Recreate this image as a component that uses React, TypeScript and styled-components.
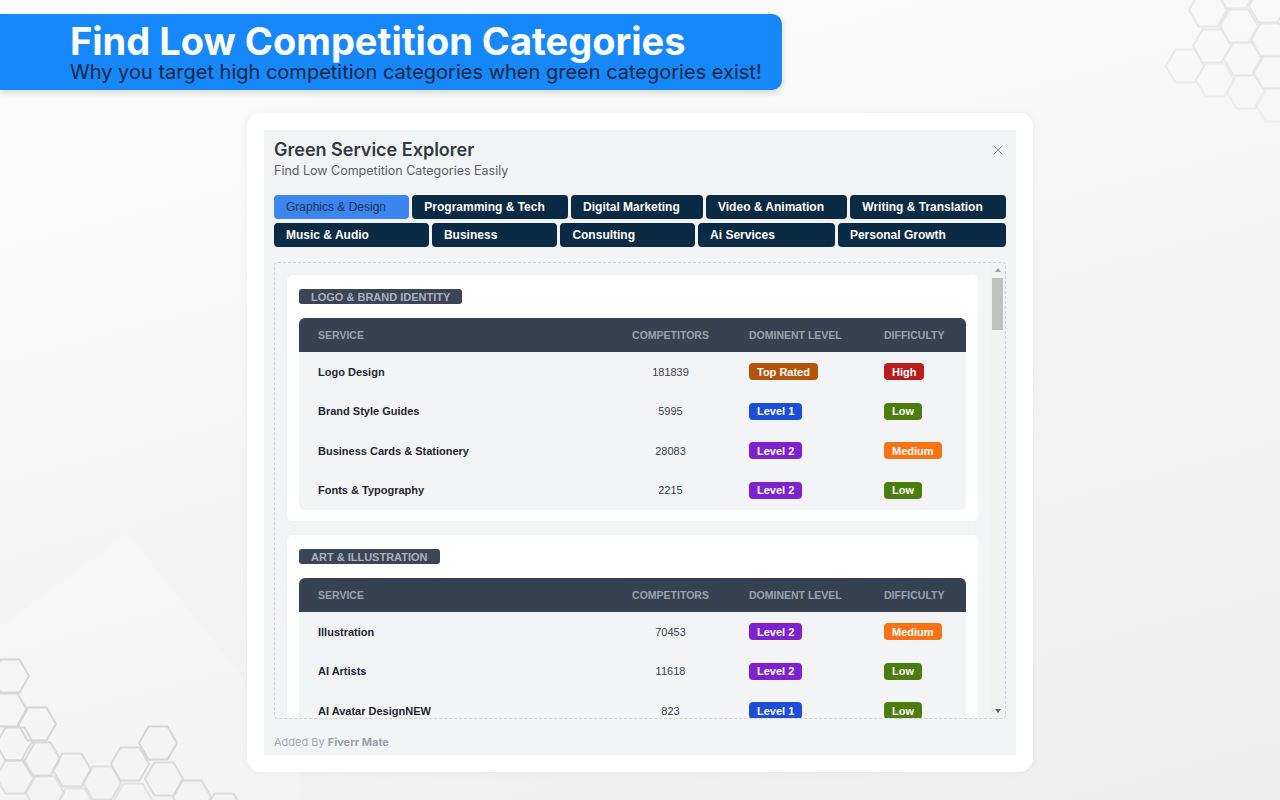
import React from 'react';
import styled, { createGlobalStyle } from 'styled-components';
import { X } from 'lucide-react';

const GlobalStyle = createGlobalStyle`
  html, body { margin: 0; padding: 0; }
  body {
    font-family: Inter, "Liberation Sans", Arial, sans-serif;
    background: #f1f1f1;
  }
  * { box-sizing: border-box; }
`;

const Page = styled.div`
  position: relative;
  width: 1280px;
  height: 800px;
  overflow: hidden;
  padding-top: 14px;
  background: linear-gradient(165deg, #fdfdfd 0%, #f6f6f6 40%, #eeeeee 100%);
`;

const Decor = styled.svg`
  position: absolute;
  left: 0;
  top: 0;
  width: 1280px;
  height: 800px;
  pointer-events: none;
  z-index: 0;
`;

const Banner = styled.header`
  position: relative;
  z-index: 1;
  width: 782px;
  height: 76px;
  padding: 8px 0 0 70px;
  background: #1688fb;
  border-radius: 0 10px 10px 0;
  box-shadow: 0 3px 6px rgba(0, 0, 0, 0.14);
`;

const BannerTitle = styled.h1`
  margin: 0;
  font-size: 38px;
  line-height: 39px;
  font-weight: 700;
  color: #ffffff;
`;

const BannerSub = styled.p`
  margin: 0;
  font-size: 20px;
  line-height: 22px;
  font-weight: 400;
  color: #0c2742;
`;

const Card = styled.section`
  position: relative;
  z-index: 1;
  width: 786px;
  height: 659px;
  margin: 23px 0 0 247px;
  padding: 17px;
  background: #ffffff;
  border-radius: 14px;
  box-shadow: 0 0 10px rgba(0, 0, 0, 0.04);
`;

const Panel = styled.div`
  height: 100%;
  padding: 10px 10px 0;
  background: #f2f3f5;
  display: flex;
  flex-direction: column;
`;

const PanelHead = styled.div`
  display: flex;
  justify-content: space-between;
  align-items: flex-start;
`;

const PanelTitle = styled.h2`
  margin: 0;
  font-size: 18px;
  line-height: 20px;
  font-weight: 600;
  color: #333a42;
`;

const PanelSub = styled.p`
  margin: 2px 0 0;
  font-size: 12.5px;
  line-height: 18px;
  color: #5a6068;
`;

const CloseButton = styled.button`
  border: none;
  background: none;
  padding: 0;
  margin-top: 2px;
  color: #8a8f96;
  display: flex;
  cursor: pointer;
`;

const Tabs = styled.nav`
  margin-top: 15px;
  display: flex;
  flex-direction: column;
  gap: 4px;
`;

const TabRow = styled.div`
  display: flex;
  gap: 3px;
`;

const Tab = styled.button<{ $active?: boolean }>`
  flex: 1 1 auto;
  height: 24px;
  padding: 0 12px;
  text-align: left;
  border: none;
  border-radius: 4px;
  font-family: "Liberation Sans", Arial, sans-serif;
  font-size: 12px;
  font-weight: ${p => (p.$active ? 400 : 700)};
  color: ${p => (p.$active ? '#1b3556' : '#ffffff')};
  background: ${p => (p.$active ? '#3c84ee' : '#0b2b45')};
  cursor: pointer;
`;

const ScrollFrame = styled.div`
  margin-top: 15px;
  height: 457px;
  display: flex;
  border: 1px dashed #cfd3d8;
  border-radius: 4px;
  overflow: hidden;
`;

const ScrollContent = styled.div`
  flex: 1;
  min-width: 0;
  padding: 12px;
  overflow: hidden;
`;

const ScrollTrack = styled.div`
  width: 15px;
  flex-shrink: 0;
  display: flex;
  flex-direction: column;
  background: #f1f1f1;
`;

const ScrollArrow = styled.div<{ $down?: boolean }>`
  height: 14px;
  display: flex;
  align-items: center;
  justify-content: center;
  &::after {
    content: '';
    border-left: 3.5px solid transparent;
    border-right: 3.5px solid transparent;
    ${p => (p.$down ? 'border-top: 4px solid #5f5f5f;' : 'border-bottom: 4px solid #a3a3a3;')}
  }
`;

const ScrollRail = styled.div`
  flex: 1;
  padding: 1px 2px;
`;

const ScrollThumb = styled.div`
  height: 52px;
  background: #c1c1c1;
`;

const Section = styled.div`
  background: #ffffff;
  border-radius: 6px;
  padding: 14px 12px 11px;
  & + & { margin-top: 14px; }
`;

const SectionLabel = styled.div`
  display: flex;
  align-items: center;
  width: fit-content;
  height: 15px;
  padding: 0 12px;
  border-radius: 3px;
  background: #3b4555;
  color: #a9b1bd;
  font-family: "Liberation Sans", Arial, sans-serif;
  font-size: 11px;
  font-weight: 700;
  text-transform: uppercase;
`;

const Table = styled.div`
  margin-top: 14px;
  border-radius: 6px;
  overflow: hidden;
  background: #f3f4f6;
`;

const Row = styled.div<{ $head?: boolean }>`
  display: grid;
  grid-template-columns: 1fr 119px 135px 101px;
  align-items: center;
  height: ${p => (p.$head ? '34px' : '39.5px')};
  background: ${p => (p.$head ? '#374151' : 'transparent')};
`;

const HeadCell = styled.div<{ $center?: boolean }>`
  padding: 0 19px;
  text-align: ${p => (p.$center ? 'center' : 'left')};
  font-family: "Liberation Sans", Arial, sans-serif;
  font-size: 10.5px;
  font-weight: 700;
  color: #9aa2ae;
  text-transform: uppercase;
  white-space: nowrap;
`;

const ServiceName = styled.div`
  padding: 0 19px;
  font-family: "Liberation Sans", Arial, sans-serif;
  font-size: 11px;
  font-weight: 700;
  color: #1f2630;
`;

const Count = styled.div`
  text-align: center;
  font-family: "Liberation Sans", Arial, sans-serif;
  font-size: 11px;
  color: #3a414b;
`;

const BadgeCell = styled.div`
  padding: 0 19px;
  display: flex;
`;

const Badge = styled.span<{ $color: string }>`
  display: inline-flex;
  align-items: center;
  height: 17px;
  padding: 0 8px;
  border-radius: 4px;
  background: ${p => p.$color};
  color: #ffffff;
  font-family: "Liberation Sans", Arial, sans-serif;
  font-size: 11px;
  font-weight: 700;
  white-space: nowrap;
`;

const Footer = styled.p`
  margin: 16px 0 0;
  font-size: 11px;
  line-height: 14px;
  color: #a7abb0;
  b { font-weight: 700; color: #9da1a7; }
`;

const badgeColors: Record<string, string> = {
  'Top Rated': '#b4540b',
  'Level 1': '#1d4ed8',
  'Level 2': '#7e22ce',
  High: '#b91c1c',
  Low: '#4d7c0f',
  Medium: '#f97316',
};

type Service = [string, number, string, string];

const sections: { title: string; rows: Service[] }[] = [
  {
    title: 'Logo & Brand Identity',
    rows: [
      ['Logo Design', 181839, 'Top Rated', 'High'],
      ['Brand Style Guides', 5995, 'Level 1', 'Low'],
      ['Business Cards & Stationery', 28083, 'Level 2', 'Medium'],
      ['Fonts & Typography', 2215, 'Level 2', 'Low'],
    ],
  },
  {
    title: 'Art & Illustration',
    rows: [
      ['Illustration', 70453, 'Level 2', 'Medium'],
      ['AI Artists', 11618, 'Level 2', 'Low'],
      ['AI Avatar DesignNEW', 823, 'Level 1', 'Low'],
    ],
  },
];

const tabRows = [
  ['Graphics & Design', 'Programming & Tech', 'Digital Marketing', 'Video & Animation', 'Writing & Translation'],
  ['Music & Audio', 'Business', 'Consulting', 'Ai Services', 'Personal Growth'],
];

function hexPoints(cx: number, cy: number, r: number) {
  const h = (r * Math.sqrt(3)) / 2;
  return [
    [cx - r, cy], [cx - r / 2, cy - h], [cx + r / 2, cy - h],
    [cx + r, cy], [cx + r / 2, cy + h], [cx - r / 2, cy + h],
  ].map(p => p.join(',')).join(' ');
}

// hex centres read off the reference
const topRightHexes: [number, number, number][] = [
  [1208, 10, 0.9], [1239, 26, 1], [1270, 40, 1], [1236, -8, 0.9],
  [1185, 66, 0.7], [1212, 46, 0.9], [1243, 59, 0.9], [1272, 72, 0.9],
  [1215, 80, 0.6], [1246, 92, 0.6], [1275, 105, 0.5], [1268, 6, 1],
];

const bottomLeftHexes: [number, number, number][] = [
  [10, 676, 1], [8, 710, 1], [37, 724, 1], [15, 744, 0.9], [41, 759, 0.9],
  [72, 770, 0.8], [15, 777, 0.7], [45, 793, 0.6], [102, 783, 0.7],
  [130, 764, 0.9], [158, 743, 1], [164, 779, 0.8], [192, 797, 0.8],
  [224, 810, 0.8], [133, 800, 0.6], [75, 805, 0.5],
];

const Backdrop: React.FC = () => (
  <Decor viewBox="0 0 1280 800">
    <polygon points="128,533 0,627 0,800 300,800 300,720 247,683" fill="#ffffff" opacity="0.18" />
    {topRightHexes.map(([x, y, o], i) => (
      <polygon key={`t${i}`} points={hexPoints(x, y, 19)} fill="none" stroke="#e6e6e6" strokeWidth="2" opacity={o} />
    ))}
    {bottomLeftHexes.map(([x, y, o], i) => (
      <polygon key={`b${i}`} points={hexPoints(x, y, 19)} fill="none" stroke="#d6d6d6" strokeWidth="2" opacity={o} />
    ))}
  </Decor>
);

const App: React.FC = () => (
  <Page>
    <GlobalStyle />
    <Backdrop />
    <Banner>
      <BannerTitle>Find Low Competition Categories</BannerTitle>
      <BannerSub>Why you target high competition categories when green categories exist!</BannerSub>
    </Banner>

    <Card>
      <Panel>
        <PanelHead>
          <div>
            <PanelTitle>Green Service Explorer</PanelTitle>
            <PanelSub>Find Low Competition Categories Easily</PanelSub>
          </div>
          <CloseButton aria-label="Close">
            <X size={16} strokeWidth={1.4} />
          </CloseButton>
        </PanelHead>

        <Tabs>
          {tabRows.map((row, ri) => (
            <TabRow key={ri}>
              {row.map(name => (
                <Tab key={name} $active={name === 'Graphics & Design'}>{name}</Tab>
              ))}
            </TabRow>
          ))}
        </Tabs>

        <ScrollFrame>
          <ScrollContent>
            {sections.map(section => (
              <Section key={section.title}>
                <SectionLabel>{section.title}</SectionLabel>
                <Table>
                  <Row $head>
                    <HeadCell>Service</HeadCell>
                    <HeadCell $center>Competitors</HeadCell>
                    <HeadCell>Dominent Level</HeadCell>
                    <HeadCell>Difficulty</HeadCell>
                  </Row>
                  {section.rows.map(([name, count, level, difficulty]) => (
                    <Row key={name}>
                      <ServiceName>{name}</ServiceName>
                      <Count>{count}</Count>
                      <BadgeCell><Badge $color={badgeColors[level]}>{level}</Badge></BadgeCell>
                      <BadgeCell><Badge $color={badgeColors[difficulty]}>{difficulty}</Badge></BadgeCell>
                    </Row>
                  ))}
                </Table>
              </Section>
            ))}
          </ScrollContent>
          <ScrollTrack>
            <ScrollArrow />
            <ScrollRail><ScrollThumb /></ScrollRail>
            <ScrollArrow $down />
          </ScrollTrack>
        </ScrollFrame>

        <Footer>Added By <b>Fiverr Mate</b></Footer>
      </Panel>
    </Card>
  </Page>
);

export default App;
